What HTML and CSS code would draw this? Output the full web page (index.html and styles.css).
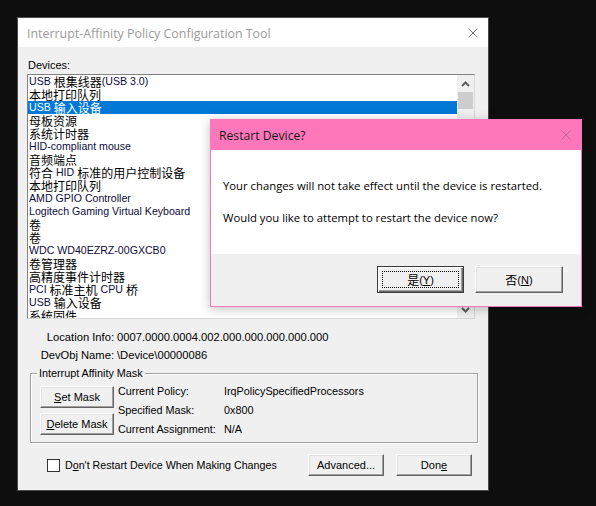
FILE: index.html
```html
<!DOCTYPE html>
<html>
<head>
<meta charset="utf-8">
<link rel="stylesheet" href="styles.css">
</head>
<body>
<div class="window">
  <div class="titlebar">
    <span class="title">Interrupt-Affinity Policy Configuration Tool</span>
    <svg class="close" width="10" height="10" viewBox="0 0 10 10"><path d="M0.5 0.5L9.5 9.5M9.5 0.5L0.5 9.5" stroke="#7a7a7a" stroke-width="1"/></svg>
  </div>
  <div class="client">
    <div class="devices-label">Devices:</div>
    <div class="listbox">
      <div class="items">
        <div class="row">USB <span class="zh">根集线器</span>(USB 3.0)</div>
        <div class="row"><span class="zh">本地打印队列</span></div>
        <div class="row selected">USB <span class="zh">输入设备</span></div>
        <div class="row"><span class="zh">母板资源</span></div>
        <div class="row"><span class="zh">系统计时器</span></div>
        <div class="row">HID-compliant mouse</div>
        <div class="row"><span class="zh">音频端点</span></div>
        <div class="row"><span class="zh">符合</span> HID <span class="zh">标准的用户控制设备</span></div>
        <div class="row"><span class="zh">本地打印队列</span></div>
        <div class="row">AMD GPIO Controller</div>
        <div class="row">Logitech Gaming Virtual Keyboard</div>
        <div class="row"><span class="zh">卷</span></div>
        <div class="row"><span class="zh">卷</span></div>
        <div class="row">WDC WD40EZRZ-00GXCB0</div>
        <div class="row"><span class="zh">卷管理器</span></div>
        <div class="row"><span class="zh">高精度事件计时器</span></div>
        <div class="row">PCI <span class="zh">标准主机</span> CPU <span class="zh">桥</span></div>
        <div class="row">USB <span class="zh">输入设备</span></div>
        <div class="row last"><span class="zh">系统固件</span></div>
      </div>
      <div class="vscroll">
        <div class="arrow"><svg width="9" height="6" viewBox="0 0 9 6"><path d="M1 5L4.5 1.5L8 5" fill="none" stroke="#606060" stroke-width="2"/></svg></div>
        <div class="thumb"></div>
        <div class="track"></div>
        <div class="arrow"><svg width="9" height="6" viewBox="0 0 9 6"><path d="M1 1L4.5 4.5L8 1" fill="none" stroke="#606060" stroke-width="2"/></svg></div>
      </div>
    </div>
    <div class="info">
      <span class="info-label">Location Info:</span><span>0007.0000.0004.002.000.000.000.000.000</span>
      <span class="info-label">DevObj Name:</span><span>\Device\00000086</span>
    </div>
    <div class="group">
      <span class="legend">Interrupt Affinity Mask</span>
      <div class="group-buttons">
        <div class="btn btn-mask"><u>S</u>et Mask</div>
        <div class="btn btn-mask"><u>D</u>elete Mask</div>
      </div>
      <div class="props">
        <span>Current Policy:</span><span>IrqPolicySpecifiedProcessors</span>
        <span>Specified Mask:</span><span>0x800</span>
        <span>Current Assignment:</span><span>N/A</span>
      </div>
    </div>
    <div class="bottom-row">
      <div class="check"></div>
      <span class="check-label">D<u>o</u>n't Restart Device When Making Changes</span>
      <div class="btn btn-adv">Advanced...</div>
      <div class="btn btn-done">Don<u>e</u></div>
    </div>
  </div>
</div>

<div class="dialog">
  <div class="dlg-title">
    <span>Restart Device?</span>
    <svg class="dlg-close" width="10" height="10" viewBox="0 0 10 10"><path d="M0.5 0.5L9.5 9.5M9.5 0.5L0.5 9.5" stroke="#c4639a" stroke-width="1"/></svg>
  </div>
  <div class="dlg-body">
    <p>Your changes will not take effect until the device is restarted.</p>
    <p>Would you like to attempt to restart the device now?</p>
  </div>
  <div class="dlg-footer">
    <div class="dbtn default"><span class="focus"><span class="zh">是</span>(<u>Y</u>)</span></div>
    <div class="dbtn"><span class="zh">否</span>(<u>N</u>)</div>
  </div>
</div>
</body>
</html>
```
FILE: styles.css
```css
html, body {
  margin: 0;
  padding: 0;
}
body {
  width: 596px;
  height: 506px;
  overflow: hidden;
  background: #0e0e0e;
  position: relative;
  font-family: "Liberation Sans", "Noto Sans CJK SC", sans-serif;
}
.zh {
  font-family: "Noto Sans CJK SC", sans-serif;
  font-size: 12px;
}
.window {
  margin: 17px 0 0 17px;
  width: 472px;
  height: 474px;
  box-sizing: border-box;
  border: 1px solid #4a4a4a;
  background: #f0f0f0;
  display: flex;
  flex-direction: column;
}
.titlebar {
  height: 29px;
  background: #fff;
  display: flex;
  align-items: center;
  padding: 0 10px 0 9px;
  flex: none;
}
.title {
  font-family: "Open Sans", "Liberation Sans", sans-serif;
  font-size: 12.4px;
  color: #9a9a9a;
  flex: 1;
  margin-top: 1px;
}
.close { flex: none; }

.client {
  flex: 1;
  display: flex;
  flex-direction: column;
  padding-top: 12px;
  font-size: 10.6px;
  color: #000;
}
.devices-label {
  line-height: 13px;
  height: 13px;
  margin: 0 0 2px 10px;
  font-size: 11px;
}
.listbox {
  margin: 0 13px 0 9px;
  height: 245px;
  box-sizing: border-box;
  border: 1px solid #828282;
  border-right-color: #d8d8d8;
  border-bottom-color: #d8d8d8;
  background: #fff;
  display: flex;
  overflow: hidden;
}
.items {
  flex: 1;
  overflow: hidden;
}
.row {
  height: 13px;
  line-height: 13px;
  padding-left: 1px;
  white-space: nowrap;
  color: #0c0c40;
}
.row.last { height: 9px; overflow: hidden; }
.row .zh {
  color: #000;
  line-height: 13px;
  vertical-align: top;
}
.row.selected { background: #0078d7; color: #fff; }
.row.selected .zh { color: #fff; }
.vscroll {
  width: 17px;
  flex: none;
  background: #f0f0f0;
  display: flex;
  flex-direction: column;
}
.arrow {
  height: 17px;
  display: flex;
  align-items: center;
  justify-content: center;
  flex: none;
}
.thumb {
  height: 17px;
  margin: 0 1px;
  background: #cdcdcd;
  flex: none;
}
.track { flex: 1; }

.info {
  display: grid;
  grid-template-columns: 96px auto;
  column-gap: 3px;
  line-height: 18px;
  margin-top: 9px;
  font-size: 11.2px;
}
.info-label { text-align: right; }

.group {
  position: relative;
  margin: 9px 10px 0 12px;
  height: 70px;
  box-sizing: border-box;
  border: 1px solid #a0a0a0;
  box-shadow: inset 1px 1px 0 #fff, 1px 1px 0 #fff;
  display: flex;
  padding: 7px 0 0 9px;
  font-size: 10.8px;
}
.legend {
  position: absolute;
  top: -7px;
  left: 6px;
  padding: 0 2px;
  line-height: 13px;
  background: #f0f0f0;
}
.group-buttons {
  display: flex;
  flex-direction: column;
  gap: 5px;
  margin-top: 5px;
}
.btn {
  box-sizing: border-box;
  height: 22px;
  display: flex;
  align-items: center;
  justify-content: center;
  background: #f0f0f0;
  border: 1px solid;
  border-color: #fff #646464 #646464 #fff;
  box-shadow: inset -1px -1px 0 #a0a0a0, inset 1px 1px 0 #e3e3e3;
  font-size: 11px;
}
.btn-mask { width: 74px; }
.props {
  display: grid;
  grid-template-columns: 106px auto;
  grid-auto-rows: 19px;
  align-items: center;
  margin-left: 4px;
}

.bottom-row {
  display: flex;
  align-items: center;
  height: 22px;
  margin-top: 11px;
  padding-left: 29px;
}
.check {
  width: 13px;
  height: 13px;
  box-sizing: border-box;
  border: 1px solid #333;
  background: #fff;
  flex: none;
}
.check-label {
  margin-left: 5px;
  flex: 1;
  font-size: 10.7px;
}
.btn-adv { width: 76px; }
.btn-done { width: 76px; margin: 0 16px 0 12px; }

.dialog {
  position: absolute;
  left: 210px;
  top: 119px;
  width: 372px;
  height: 188px;
  box-sizing: border-box;
  border: 1px solid #ff77bb;
  background: #fff;
  display: flex;
  flex-direction: column;
  box-shadow: 0 2px 10px rgba(0,0,0,0.25);
}
.dlg-title {
  height: 30px;
  flex: none;
  background: #ff77bb;
  display: flex;
  align-items: center;
  padding: 0 10px 0 8px;
  font-family: "Open Sans", "Liberation Sans", sans-serif;
  font-size: 12.2px;
  color: #1a1a1a;
}
.dlg-title span { flex: 1; }
.dlg-body {
  height: 104px;
  flex: none;
  padding: 28px 0 0 12px;
  box-sizing: border-box;
  font-family: "Open Sans", "Liberation Sans", sans-serif;
  font-size: 11.3px;
  color: #000;
}
.dlg-body p {
  margin: 0 0 16px 0;
  line-height: 16px;
}
.dlg-footer {
  flex: 1;
  background: #f0f0f0;
  display: flex;
  justify-content: flex-end;
  align-items: flex-start;
  padding: 12px 18px 0 0;
  gap: 11px;
}
.dbtn {
  width: 87px;
  height: 27px;
  box-sizing: border-box;
  display: flex;
  align-items: center;
  justify-content: center;
  background: #f0f0f0;
  border: 1px solid;
  border-color: #fff #646464 #646464 #fff;
  box-shadow: inset -1px -1px 0 #a0a0a0, inset 1px 1px 0 #e3e3e3;
  font-size: 11px;
  color: #000;
}
.dbtn + .dbtn { width: 88px; }
.dbtn.default {
  border: 1px solid #3c3c3c;
  box-shadow: inset 1px 1px 0 #fff, inset -1px -1px 0 #696969, inset -2px -2px 0 #a0a0a0;
}
.focus {
  display: flex;
  align-items: center;
  justify-content: center;
  width: 77px;
  height: 17px;
  box-sizing: border-box;
  border: 1px dotted #000;
}
```
